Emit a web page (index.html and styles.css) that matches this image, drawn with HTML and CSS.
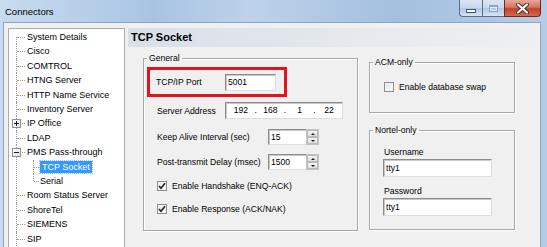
FILE: index.html
```html
<!DOCTYPE html>
<html lang="en">
<head>
  <meta charset="UTF-8" />
  <title>Connectors</title>
  <link rel="stylesheet" href="styles.css">
</head>
<body>
  <div class="window">
    <div class="titlebar">
      <span class="title">Connectors</span>
      <div class="caption-buttons">
        <span class="cap-btn cap-min"><span class="min-glyph"></span></span>
        <span class="cap-btn cap-max"><span class="max-glyph"></span></span>
        <span class="cap-btn cap-close">
          <svg width="13" height="11" viewBox="0 0 13 11">
            <path d="M2 1.5 L11 9.5 M11 1.5 L2 9.5" stroke="#4a2b24" stroke-width="4" stroke-linecap="round"/>
            <path d="M2 1.5 L11 9.5 M11 1.5 L2 9.5" stroke="#fff" stroke-width="2.2" stroke-linecap="round"/>
          </svg>
        </span>
      </div>
    </div>

    <div class="client">
      <div class="tree">
        <ul class="tree-root">
          <li>System Details</li>
          <li>Cisco</li>
          <li>COMTROL</li>
          <li>HTNG Server</li>
          <li>HTTP Name Service</li>
          <li>Inventory Server</li>
          <li><span class="toggle plus"></span>IP Office</li>
          <li>LDAP</li>
          <li><span class="toggle minus"></span>PMS Pass-through
            <ul class="tree-sub">
              <li><span class="selected">TCP Socket</span></li>
              <li>Serial</li>
            </ul>
          </li>
          <li>Room Status Server</li>
          <li>ShoreTel</li>
          <li>SIEMENS</li>
          <li>SIP</li>
        </ul>
      </div>

      <div class="main">
        <div class="page-header">TCP Socket</div>
        <div class="page-body">
          <fieldset class="group general">
            <legend>General</legend>
            <div class="port-row">
              <label class="port-label">TCP/IP Port</label>
              <span class="textbox port-box">5001</span>
            </div>
            <div class="form-row server-row">
              <label class="label-short">Server Address</label>
              <span class="textbox ip-box">
                <span class="ip-seg">192</span><span class="ip-dot">.</span>
                <span class="ip-seg">168</span><span class="ip-dot">.</span>
                <span class="ip-seg">1</span><span class="ip-dot">.</span>
                <span class="ip-seg">22</span>
              </span>
            </div>
            <div class="form-row spin-row">
              <label class="label-long">Keep Alive Interval (sec)</label>
              <span class="spin">
                <span class="textbox spin-value">15</span>
                <span class="spin-btns"><span class="spin-up"></span><span class="spin-down"></span></span>
              </span>
            </div>
            <div class="form-row spin-row second">
              <label class="label-long">Post-transmit Delay (msec)</label>
              <span class="spin">
                <span class="textbox spin-value">1500</span>
                <span class="spin-btns"><span class="spin-up"></span><span class="spin-down"></span></span>
              </span>
            </div>
            <div class="form-row check-row">
              <span class="checkbox checked"><svg width="8" height="8" viewBox="0 0 8 8"><path d="M1 4 L3 6.2 L7 1.2" stroke="#222" stroke-width="1.6" fill="none"/></svg></span>
              <span>Enable Handshake (ENQ-ACK)</span>
            </div>
            <div class="form-row check-row">
              <span class="checkbox checked"><svg width="8" height="8" viewBox="0 0 8 8"><path d="M1 4 L3 6.2 L7 1.2" stroke="#222" stroke-width="1.6" fill="none"/></svg></span>
              <span>Enable Response (ACK/NAK)</span>
            </div>
          </fieldset>

          <div class="side">
            <fieldset class="group acm">
              <legend>ACM-only</legend>
              <div class="check-row acm-row">
                <span class="checkbox"></span>
                <span>Enable database swap</span>
              </div>
            </fieldset>
            <fieldset class="group nortel">
              <legend>Nortel-only</legend>
              <label class="stack-label first">Username</label>
              <span class="textbox stack-box">tty1</span>
              <label class="stack-label">Password</label>
              <span class="textbox stack-box">tty1</span>
            </fieldset>
          </div>
        </div>
      </div>
    </div>
  </div>
</body>
</html>
```

FILE: styles.css
```css
* {
  box-sizing: border-box;
}

body {
  margin: 0;
  width: 547px;
  height: 247px;
  overflow: hidden;
  font-family: "Liberation Sans", Arial, sans-serif;
  font-size: 9px;
  color: #000;
}

.window {
  height: 247px;
  display: flex;
  flex-direction: column;
  padding: 0 6px 0 3px;
  background: linear-gradient(to right, #c9dbef 0%, #a9c4e3 28%, #bdd2ea 46%, #a4bfdf 72%, #b5cce7 100%);
}

.titlebar {
  height: 22px;
  display: flex;
  align-items: flex-start;
}

.title {
  padding: 6px 0 0 2px;
  font-size: 9.5px;
  line-height: 11px;
}

.caption-buttons {
  margin-left: auto;
  display: flex;
}

.cap-btn {
  height: 17px;
  border: 1px solid #5b6f8b;
  border-top: none;
  display: flex;
  align-items: center;
  justify-content: center;
  background: linear-gradient(to bottom, rgba(255, 255, 255, 0.55), rgba(255, 255, 255, 0.3) 50%, rgba(170, 195, 228, 0.4) 50%, rgba(230, 240, 252, 0.7));
}

.cap-min {
  width: 23px;
  border-radius: 0 0 0 4px;
  border-right: none;
}

.cap-max {
  width: 22px;
  border-right: none;
}

.cap-close {
  width: 37px;
  border-radius: 0 0 4px 0;
  border-color: #6c2a1f;
  background: linear-gradient(to bottom, #e8a898, #d8735f 45%, #c3402a 55%, #d46a4f);
}

.min-glyph {
  width: 10px;
  height: 4px;
  margin-top: 5px;
  background: #fff;
  border: 1px solid #40546f;
}

.max-glyph {
  width: 9px;
  height: 7px;
  border: 1px solid rgba(80, 100, 130, 0.45);
  border-top-width: 2px;
  box-shadow: inset 0 0 0 1px rgba(255, 255, 255, 0.5);
}

.client {
  flex: 1;
  display: flex;
  background: #f0f0f0;
  border: 1px solid #8da4c1;
  border-bottom: none;
}

/* tree */

.tree {
  width: 117px;
  margin: 5px 0 0 4px;
  padding-top: 1px;
  background: #fff;
  border: 1px solid #a5adb8;
  border-bottom: none;
  overflow: hidden;
}

.tree ul {
  list-style: none;
  margin: 0;
  padding: 0;
}

.tree li {
  position: relative;
  line-height: 14.4px;
  white-space: nowrap;
}

.tree-root > li {
  padding-left: 18px;
}

.tree-root > li::before {
  content: "";
  position: absolute;
  left: 7px;
  top: 0;
  bottom: 0;
  border-left: 1px dotted #9a9a9a;
}

.tree-root > li:first-child::before {
  top: 7px;
}

.tree-root > li:last-child::before {
  bottom: -12px;
}

.tree-root > li::after {
  content: "";
  position: absolute;
  left: 8px;
  top: 7px;
  width: 8px;
  border-top: 1px dotted #9a9a9a;
}

.tree-sub > li {
  padding-left: 13px;
}

.tree-sub > li::before {
  content: "";
  position: absolute;
  left: 6px;
  top: 0;
  height: 14px;
  border-left: 1px dotted #9a9a9a;
}

.tree-sub > li:last-child::before {
  height: 7px;
}

.tree-sub > li::after {
  content: "";
  position: absolute;
  left: 7px;
  top: 7px;
  width: 5px;
  border-top: 1px dotted #9a9a9a;
}

.toggle {
  position: absolute;
  left: 3px;
  top: 3px;
  width: 9px;
  height: 9px;
  border: 1px solid #919191;
  background: linear-gradient(to bottom right, #fff, #e2e2e2);
  z-index: 1;
}

.toggle::before {
  content: "";
  position: absolute;
  left: 1px;
  top: 3px;
  width: 5px;
  height: 1px;
  background: #1d1d1d;
}

.toggle.plus::after {
  content: "";
  position: absolute;
  left: 3px;
  top: 1px;
  width: 1px;
  height: 5px;
  background: #1d1d1d;
}

.selected {
  display: inline-block;
  line-height: 12px;
  padding: 0 2px;
  color: #fff;
  background: #3399ff;
  outline: 1px dotted #9cc8f5;
}

/* main page */

.main {
  flex: 1;
  margin: 5px 5px 0 3px;
}

.page-header {
  height: 19px;
  padding-left: 3px;
  font-size: 11px;
  font-weight: bold;
  line-height: 19px;
  background: linear-gradient(to right, #d7dfe9, #e6eaef 60%, #eef0f2);
}

.page-body {
  display: flex;
  align-items: flex-start;
  padding: 6px 0 0 15px;
  font-size: 8.6px;
}

.group {
  margin: 0;
  padding: 0;
  border: 1px solid #a8a8a8;
  box-shadow: inset 1px 1px 0 #fff, 1px 1px 0 #fff;
}

.group legend {
  margin-left: 3px;
  padding: 0 2px;
  line-height: 11px;
}

.general {
  width: 215px;
  height: 178px;
}

.port-row {
  width: 140px;
  height: 30px;
  margin: 3px 0 0 3px;
  padding-left: 6px;
  display: flex;
  align-items: center;
  border: 3px solid #e4141f;
}

.port-label {
  width: 69px;
}

.textbox {
  display: block;
  background: #fff;
  border: 1px solid;
  border-color: #8c8c8c #dedede #dedede #8c8c8c;
  box-shadow: inset 1px 1px 0 #c8c8c8;
  padding-left: 2px;
  line-height: 15px;
  white-space: nowrap;
}

.port-box {
  width: 51px;
  height: 17px;
}

.form-row {
  display: flex;
  align-items: center;
  margin-left: 13px;
}

.label-short {
  width: 68px;
}

.label-long {
  width: 111px;
}

.server-row {
  margin-top: 5px;
}

.ip-box {
  width: 118px;
  height: 17px;
  display: flex;
}

.ip-seg {
  width: 26px;
  text-align: center;
}

.ip-dot {
  width: 3.5px;
  text-align: center;
}

.spin-row {
  margin-top: 10px;
}

.spin-row.second {
  margin-top: 9px;
}

.spin {
  display: flex;
  width: 51px;
  height: 16px;
}

.spin-value {
  flex: 1;
  line-height: 14px;
  border-right: none;
}

.spin-btns {
  width: 13px;
  display: flex;
  flex-direction: column;
  border: 1px solid #c4c4c4;
  background: #fff;
}

.spin-up,
.spin-down {
  flex: 1;
  position: relative;
  background: linear-gradient(to bottom, #f4f4f4, #dedede);
  border: 1px solid #b9b9b9;
}

.spin-up::after,
.spin-down::after {
  content: "";
  position: absolute;
  left: 3px;
  top: 2px;
  border-left: 2px solid transparent;
  border-right: 2px solid transparent;
}

.spin-up::after {
  border-bottom: 2px solid #222;
}

.spin-down::after {
  border-top: 2px solid #222;
}

.check-row {
  display: flex;
  align-items: center;
  height: 14px;
  gap: 5px;
  margin-top: 9px;
}

.checkbox {
  width: 10px;
  height: 10px;
  display: flex;
  align-items: center;
  justify-content: center;
  border: 1px solid #8e8f8f;
  background: linear-gradient(to bottom right, #e4e4e4, #fdfdfd);
  box-shadow: inset 0 0 0 1px #f4f4f4;
}

/* right column */

.side {
  width: 146px;
  margin: 4px 0 0 11px;
  display: flex;
  flex-direction: column;
}

.acm {
  height: 56px;
}

.acm-row {
  margin: 12px 0 0 14px;
}

.nortel {
  height: 105px;
  margin-top: 11.5px;
}

.stack-label {
  display: block;
  margin: 8.5px 0 0 14px;
  line-height: 11px;
}

.stack-label.first {
  margin-top: 11px;
}

.stack-box {
  width: 109px;
  height: 18px;
  margin: 1.5px 0 0 13px;
  line-height: 16px;
}
```
